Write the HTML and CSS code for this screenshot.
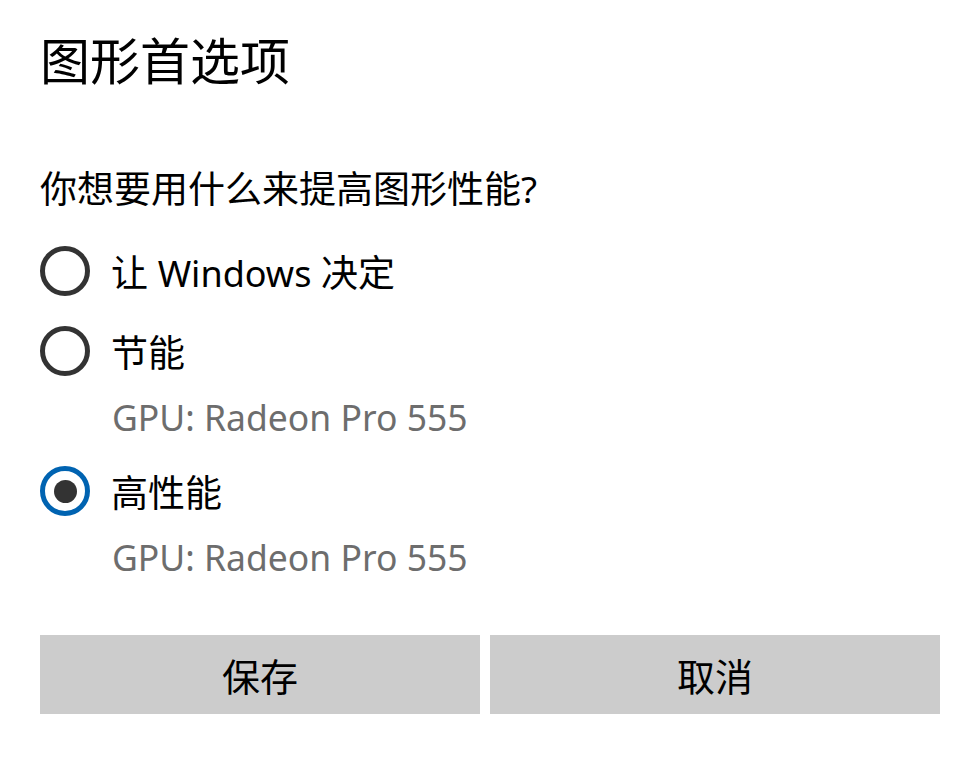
FILE: index.html
```html
<!DOCTYPE html>
<html lang="zh-CN">
<head>
  <meta charset="UTF-8">
  <meta name="viewport" content="width=device-width, initial-scale=1.0">
  <title>图形首选项</title>
  <link rel="stylesheet" href="styles.css">
</head>
<body>
  <div class="dialog">
    <h1 class="title">图形首选项</h1>

    <p class="question">你想要用什么来提高图形性能?</p>

    <div class="options">
      <label class="option">
        <span class="radio"></span>
        <span class="label">让 <span class="latin">Windows</span> 决定</span>
      </label>

      <label class="option">
        <span class="radio"></span>
        <span class="label">节能</span>
      </label>
      <div class="gpu">GPU: Radeon Pro 555</div>

      <label class="option option-high">
        <span class="radio checked"></span>
        <span class="label">高性能</span>
      </label>
      <div class="gpu">GPU: Radeon Pro 555</div>
    </div>

    <div class="buttons">
      <button class="btn">保存</button>
      <button class="btn">取消</button>
    </div>
  </div>
</body>
</html>
```

FILE: styles.css
```css
body {
  margin: 0;
  padding: 0;
  background-color: #fff;
  color: #000;
  font-family: "Noto Sans", "Noto Sans CJK SC", sans-serif;
}

.dialog {
  padding: 31px 38px 0 40px;
}

.title {
  margin: 0;
  font-size: 50px;
  font-weight: normal;
  line-height: 60px;
}

.question {
  margin: 73px 0 0;
  font-size: 37px;
  line-height: 50px;
}

.options {
  margin-top: 32px;
}

.option {
  display: flex;
  align-items: center;
  gap: 21px;
  height: 50px;
  font-size: 37px;
}

.option + .option {
  margin-top: 30px;
}

.option-high {
  margin-top: 24px;
}

.latin {
  font-size: 36px;
}

.radio {
  width: 50px;
  height: 50px;
  box-sizing: border-box;
  border: 5px solid #333;
  border-radius: 50%;
  display: flex;
  align-items: center;
  justify-content: center;
}

.radio.checked {
  border-color: #0063b1;
}

.radio.checked::after {
  content: "";
  width: 23px;
  height: 23px;
  border-radius: 50%;
  background-color: #333;
}

.gpu {
  margin: 16px 0 0 72px;
  font-size: 35.5px;
  line-height: 50px;
  color: #6d6d6d;
}

.buttons {
  display: grid;
  grid-template-columns: 440px 450px;
  gap: 10px;
  margin-top: 53px;
}

.btn {
  height: 79px;
  border: none;
  background-color: #ccc;
  color: #000;
  font-family: "Noto Sans CJK SC", sans-serif;
  font-size: 38px;
  padding: 0;
}
```
